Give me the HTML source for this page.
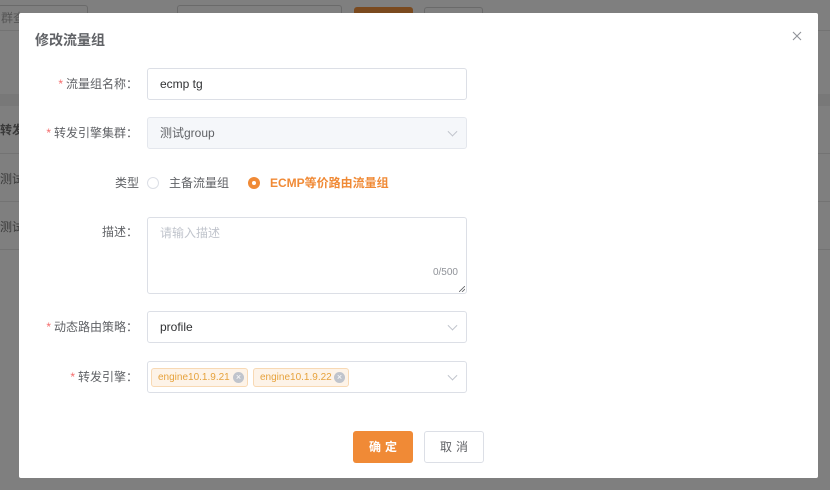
<!DOCTYPE html>
<html><head><meta charset="utf-8"><style>
*{box-sizing:border-box;margin:0;padding:0}
body{width:830px;height:490px;overflow:hidden;background:#7f7f7f;font-family:"Liberation Sans","Noto Sans CJK SC",sans-serif;position:relative;font-size:12px;color:#606266}
.a{position:absolute}
.modal{left:19px;top:13px;width:799px;height:465px;background:#fff;border-radius:2px}
.lbl{position:absolute;right:2px;width:140px;text-align:right;font-size:12px;color:#606266;line-height:16px}
.star{color:#f56c6c;margin-right:3px}
.inp{position:absolute;left:147px;width:320px;border:1px solid #dcdfe6;border-radius:3px;font-size:12px;color:#606266;padding-left:12px}
.arr{position:absolute;right:10px;top:50%;width:7px;height:7px;border-right:1px solid #c0c4cc;border-bottom:1px solid #c0c4cc;transform:translateY(-70%) rotate(45deg)}
.tag{position:absolute;top:6px;height:19px;border:1px solid #f8d9b4;background:#fdf3e8;color:#e6a23c;border-radius:3px;font-size:10px;line-height:17px;padding-left:6px;white-space:nowrap;overflow:hidden}
.tag i{position:absolute;right:3px;top:3px;width:11px;height:11px;border-radius:50%;background:#c0c4cc;color:#fff;font-style:normal;font-size:9px;line-height:11px;text-align:center}
</style></head><body>
<div class="a" style="left:-2px;top:5px;width:90px;height:26px;border:1px solid #6a6a6a;border-radius:3px;color:#555;line-height:24px;padding-left:2px">群查</div>
<div class="a" style="left:177px;top:5px;width:165px;height:26px;border:1px solid #6a6a6a;border-radius:3px"></div>
<div class="a" style="left:354px;top:7px;width:59px;height:24px;background:#7a4a1f;border-radius:3px"></div>
<div class="a" style="left:424px;top:7px;width:59px;height:24px;border:1px solid #6a6a6a;border-radius:3px"></div>
<div class="a" style="left:0;top:30px;width:830px;height:1px;background:#737373"></div>
<div class="a" style="left:0;top:94px;width:830px;height:12px;background:#787878"></div>
<div class="a" style="left:0;top:121px;color:#3a3a3a;font-weight:bold">转发</div>
<div class="a" style="left:0;top:153px;width:830px;height:1px;background:#737373"></div>
<div class="a" style="left:0;top:170px;color:#3a3a3a">测试</div>
<div class="a" style="left:0;top:201px;width:830px;height:1px;background:#737373"></div>
<div class="a" style="left:0;top:218px;color:#3a3a3a">测试</div>
<div class="a" style="left:0;top:249px;width:830px;height:1px;background:#737373"></div>

<div class="a modal">
<div class="a" style="left:16px;top:17px;font-size:14px;font-weight:bold;color:#606266">修改流量组</div>
<svg class="a" style="left:773px;top:18px" width="10" height="10" viewBox="0 0 10 10"><path d="M1 1L9 9M9 1L1 9" stroke="#909399" stroke-width="1.1"/></svg>
</div>

<div class="a" style="left:0;top:76px;width:140px"><div class="lbl"><span class="star">*</span>流量组名称：</div></div>
<div class="inp" style="top:68px;height:32px;line-height:30px;color:#303133">ecmp tg</div>

<div class="a" style="left:0;top:125px;width:140px"><div class="lbl"><span class="star">*</span>转发引擎集群：</div></div>
<div class="inp" style="top:117px;height:32px;line-height:30px;background:#f5f7fa;border-color:#e4e7ed">测试group<span class="arr"></span></div>

<div class="a" style="left:115px;top:175px;line-height:16px">类型</div>
<div class="a" style="left:147px;top:177px;width:12px;height:12px;border:1px solid #dcdfe6;border-radius:50%"></div>
<div class="a" style="left:169px;top:175px;line-height:16px;color:#606266">主备流量组</div>
<div class="a" style="left:248px;top:177px;width:12px;height:12px;border-radius:50%;background:#f08a36"><div class="a" style="left:4px;top:4px;width:4px;height:4px;background:#fff;border-radius:50%"></div></div>
<div class="a" style="left:270px;top:175px;line-height:16px;color:#f08a36;font-weight:bold">ECMP等价路由流量组</div>

<div class="a" style="left:0;top:224px;width:140px"><div class="lbl">描述：</div></div>
<div class="inp" style="top:217px;height:77px;padding-top:6px;color:#c0c4cc">请输入描述
<div class="a" style="right:8px;bottom:15px;font-size:10px;color:#909399">0/500</div>
<svg class="a" style="right:1px;bottom:1px" width="6" height="6" viewBox="0 0 6 6"><path d="M0 6L6 0M3 6L6 3" stroke="#606266" stroke-width="0.8"/></svg></div>

<div class="a" style="left:0;top:319px;width:140px"><div class="lbl"><span class="star">*</span>动态路由策略：</div></div>
<div class="inp" style="top:311px;height:32px;line-height:30px;color:#303133">profile<span class="arr"></span></div>

<div class="a" style="left:0;top:369px;width:140px"><div class="lbl"><span class="star">*</span>转发引擎：</div></div>
<div class="inp" style="top:361px;height:32px;padding:0">
<div class="tag" style="left:3px;width:97px">engine10.1.9.21<i>×</i></div>
<div class="tag" style="left:105px;width:96px">engine10.1.9.22<i>×</i></div>
<span class="arr"></span></div>

<div class="a" style="left:353px;top:431px;width:60px;height:32px;background:#f08a36;border-radius:3px;color:#fff;text-align:center;line-height:32px;letter-spacing:4px;font-weight:bold;padding-left:4px">确定</div>
<div class="a" style="left:424px;top:431px;width:60px;height:32px;border:1px solid #dcdfe6;border-radius:3px;color:#606266;text-align:center;line-height:30px;letter-spacing:4px;padding-left:4px">取消</div>
</body></html>
